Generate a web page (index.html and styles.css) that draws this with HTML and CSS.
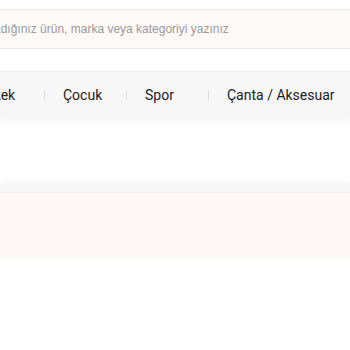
FILE: index.html
```html
<!DOCTYPE html>
<html lang="tr">
<head>
    <meta charset="UTF-8">
    <meta name="viewport" content="width=device-width, initial-scale=1.0">
    <title>Mağaza</title>
    <link rel="stylesheet" href="styles.css">
</head>
<body>
    <div class="search">
        <input type="text" class="search-input" placeholder="Aradığınız ürün, marka veya kategoriyi yazınız">
    </div>

    <nav class="menu">
        <ul class="menu-list">
            <li class="menu-item"><a href="#">Erkek</a><span class="sep"></span></li>
            <li class="menu-item"><a href="#">Çocuk</a><span class="sep"></span></li>
            <li class="menu-item"><a href="#">Spor</a><span class="sep"></span></li>
            <li class="menu-item"><a href="#">Çanta / Aksesuar</a><span class="sep"></span></li>
            <li class="menu-item"><a href="#">Ev</a><span class="sep"></span></li>
        </ul>
    </nav>

    <div class="gap"></div>

    <div class="strip"></div>
    <div class="promo"></div>
</body>
</html>
```

FILE: styles.css
```css
/* General Styling */
body {
    margin: 0;
    padding: 0;
    background-color: #fff;
    overflow: hidden;
    font-family: Roboto, "Liberation Sans", sans-serif;
}

/* Search */
.search {
    margin: 9px -20px 0 -37px;
}

.search-input {
    box-sizing: border-box;
    width: 100%;
    height: 40px;
    padding: 0 18px;
    border: 1px solid #ebe8e6;
    background-color: #fdf9f7;
    font-family: "Liberation Sans", Arial, sans-serif;
    font-size: 12px;
    color: #333;
    outline: none;
}

.search-input::placeholder {
    color: #9a9a9a;
}

/* Menu */
.menu {
    margin-top: 22px;
    height: 47px;
    background-color: #f7f7f7;
    border-top: 1px solid #efefef;
    box-shadow: 0 4px 8px rgba(0, 0, 0, 0.04);
    overflow: hidden;
}

.menu-list {
    display: flex;
    height: 100%;
    margin: 0 0 0 -37px;
    padding: 0;
    list-style: none;
}

.menu-item {
    box-sizing: border-box;
    display: flex;
    align-items: center;
    flex-shrink: 0;
    min-width: 82px;
    padding-left: 18px;
    gap: 16px;
}

.menu-item a {
    color: #222;
    text-decoration: none;
    font-size: 14px;
    line-height: 1;
    margin-top: -2px;
    white-space: nowrap;
}

.sep {
    width: 1px;
    height: 9px;
    margin-left: auto;
    background-color: #dcdcdc;
}

.gap {
    height: 64px;
}

.strip {
    height: 9px;
    background-color: #f7f7f7;
    box-shadow: 0 -3px 6px rgba(0, 0, 0, 0.03);
}

.promo {
    height: 66px;
    background-color: #fdf7f6;
    border-top: 1px solid #f3efee;
}
```
